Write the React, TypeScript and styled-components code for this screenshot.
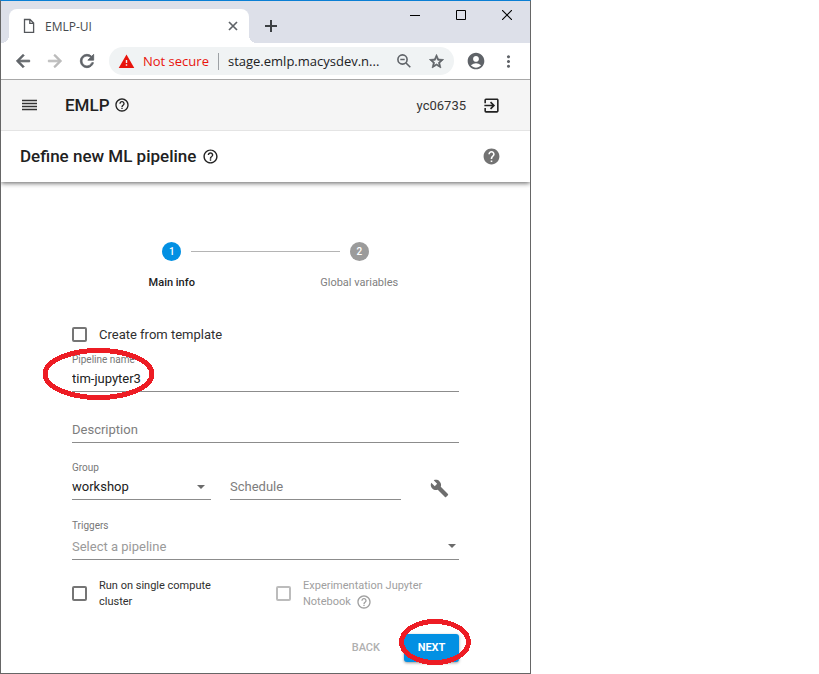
import React from "react";
import styled, { createGlobalStyle, css } from "styled-components";
import {
  MdAccountCircle,
  MdArrowBack,
  MdArrowForward,
  MdBuild,
  MdExitToApp,
  MdHelp,
  MdHelpOutline,
  MdMoreVert,
  MdRefresh,
  MdStarBorder,
  MdWarning,
} from "react-icons/md";

const GlobalStyle = createGlobalStyle`
  *, *::before, *::after { box-sizing: border-box; }
  body {
    margin: 0;
    background: #fff;
    color: #212121;
    font-family: Roboto, "Liberation Sans", sans-serif;
    font-size: 13px;
  }
  button, input, select { font: inherit; color: inherit; }
  svg { display: block; }
`;

const BrowserWindow = styled.div`
  width: 100%;
  max-width: 531px;
  border: 1px solid #666;
  border-top-color: #0a7fd4;
  background: #fff;
`;

const PlainButton = styled.button`
  display: flex;
  align-items: center;
  justify-content: center;
  flex: none;
  padding: 0;
  border: 0;
  background: none;
  cursor: pointer;
`;

/* Browser chrome */

const TabStrip = styled.div`
  display: flex;
  align-items: flex-end;
  height: 42px;
  padding-left: 8px;
  background: #dde0e9;
  font-family: "Open Sans", "Noto Sans", sans-serif;
`;

const Tab = styled.div`
  display: flex;
  align-items: center;
  flex: 0 1 240px;
  height: 34px;
  padding: 0 10px 0 14px;
  border-radius: 8px 8px 0 0;
  background: #fff;
  color: #45494d;
  font-size: 12px;
  position: relative;

  &::before,
  &::after {
    content: "";
    position: absolute;
    bottom: 0;
    width: 8px;
    height: 8px;
  }
  &::before {
    right: 100%;
    background: radial-gradient(circle at 0 0, transparent 8px, #fff 8px);
  }
  &::after {
    left: 100%;
    background: radial-gradient(circle at 100% 0, transparent 8px, #fff 8px);
  }
`;

const TabTitle = styled.span`
  flex: 1;
  margin-left: 10px;
`;

const NewTab = styled(PlainButton)`
  width: 28px;
  height: 34px;
  margin-left: 8px;
`;

const WindowControls = styled.div`
  display: flex;
  align-self: flex-start;
  margin-left: auto;
`;

const WindowControl = styled(PlainButton)`
  width: 46px;
  height: 28px;
`;

const Toolbar = styled.div`
  display: flex;
  align-items: center;
  height: 37px;
  padding: 0 12px;
  border-bottom: 1px solid #a8a8a8;
  color: #5f6368;
`;

const NavButton = styled(PlainButton)<{ $muted?: boolean }>`
  width: 20px;
  height: 28px;
  margin-right: 12px;
  color: ${(p) => (p.$muted ? "#bababa" : "#5f6368")};

  path:not([fill="none"]) {
    stroke-width: 1px;
  }
`;

const AddressBar = styled.div`
  display: flex;
  align-items: center;
  flex: 1;
  min-width: 0;
  height: 28px;
  margin-right: 12px;
  padding: 0 8px 0 9px;
  border-radius: 14px;
  background: #f0f3f4;
  font-family: "Open Sans", "Noto Sans", sans-serif;
  font-size: 13px;
`;

const NotSecure = styled.span`
  display: flex;
  align-items: center;
  flex: none;
  gap: 8px;
  margin-right: 9px;
  padding-right: 9px;
  border-right: 1px solid #9da1a5;
  color: #e8140c;
  line-height: 16px;
`;

const Address = styled.input`
  flex: 1;
  min-width: 0;
  padding: 0;
  border: 0;
  outline: 0;
  background: none;
  color: #202124;
`;

const AddressAction = styled(PlainButton)`
  width: 20px;
  height: 28px;
  margin-left: 12px;
  color: #5f6368;

  svg[stroke-width="0"] path:not([fill="none"]) {
    stroke-width: 1px;
  }
`;

const ToolbarAction = styled(PlainButton)`
  width: 20px;
  height: 28px;
  margin-right: 12px;
  color: #5f6368;

  &:last-child {
    margin-right: 0;
  }
`;

/* Application */

const AppBar = styled.header`
  display: flex;
  align-items: center;
  height: 51px;
  padding: 0 29px 0 21px;
  border-bottom: 1px solid #e4e4e4;
  background: #f5f5f5;
`;

const MenuButton = styled(PlainButton)`
  height: 20px;
  margin-right: 28px;
`;

const Brand = styled.span`
  margin-right: 4px;
  font-size: 17px;
  font-weight: 500;
`;

const UserName = styled.span`
  margin-left: auto;
  margin-right: 16px;
  color: #333;
`;

const TitleBar = styled.div`
  display: flex;
  align-items: center;
  height: 51px;
  padding: 0 29px 0 19px;
  background: #fff;
  box-shadow: 0 1px 5px rgba(0, 0, 0, 0.65);
  clip-path: inset(0 0 -10px 0);
`;

const Title = styled.h1`
  margin: 0 6px 0 0;
  padding-bottom: 2px;
  font-size: 17px;
  font-weight: 500;
`;

const PageHelp = styled(PlainButton)`
  margin-left: auto;
  color: #737373;
`;

const Form = styled.form`
  padding: 60px 71px 11px;
`;

const Stepper = styled.ol`
  display: grid;
  grid-template-columns: 1fr 1fr;
  margin: 0 6px 34px;
  padding: 0;
  list-style: none;
`;

const Step = styled.li<{ $active?: boolean }>`
  color: ${(p) => (p.$active ? "#212121" : "#808080")};
  font-size: 11px;
  font-weight: ${(p) => (p.$active ? 500 : 400)};
  line-height: 16px;
  text-align: center;
`;

const StepHead = styled.div`
  display: flex;
  align-items: center;
  margin-bottom: 14px;
`;

const StepLine = styled.span<{ $side: "left" | "right"; $hidden?: boolean }>`
  flex: 1;
  height: 1px;
  ${(p) => (p.$side === "left" ? "margin-right" : "margin-left")}: 10px;
  background: ${(p) => (p.$hidden ? "transparent" : "#b4b4b4")};
`;

const StepNumber = styled.span<{ $active?: boolean }>`
  width: 19px;
  height: 19px;
  border-radius: 50%;
  background: ${(p) => (p.$active ? "#0290e3" : "#9b9b9b")};
  color: #fff;
  font-size: 10px;
  font-weight: 500;
  line-height: 19px;
`;

const CheckLabel = styled.label<{ $small?: boolean; $disabled?: boolean }>`
  display: flex;
  align-items: center;
  gap: 12px;
  color: ${(p) => (p.$disabled ? "#a0a0a0" : "#303030")};
  font-size: ${(p) => (p.$small ? "11px" : "13px")};
  line-height: ${(p) => (p.$small ? "16px" : "20px")};
`;

const Checkbox = styled.input`
  appearance: none;
  flex: none;
  width: 15px;
  height: 15px;
  margin: 0 0 1px;
  border: 2px solid #757575;
  border-radius: 2px;
  background: #fff;

  &:checked {
    border-color: #0290e3;
    background: #0290e3;
  }
  &:disabled {
    border-color: #bcbcbc;
  }
`;

const Field = styled.div<{ $top: number }>`
  position: relative;
  min-width: 0;
  margin-top: ${(p) => p.$top}px;
`;

const FieldLabel = styled.label`
  display: block;
  height: 12px;
  color: #777;
  font-size: 10px;
  line-height: 14px;
`;

const control = css`
  display: block;
  width: 100%;
  height: 27px;
  padding: 0;
  border: 0;
  border-bottom: 1px solid #8c8c8c;
  border-radius: 0;
  outline: 0;
  background: transparent;
`;

const TextInput = styled.input`
  ${control}
  &::placeholder {
    color: #7d7d7d;
    opacity: 1;
  }
`;

const SelectBox = styled.div<{ $inset: number }>`
  display: grid;
  align-items: center;
  color: #6b6b6b;

  & > * {
    grid-area: 1 / 1;
  }
  & > svg {
    justify-self: end;
    margin-right: ${(p) => p.$inset}px;
    pointer-events: none;
  }
`;

const Select = styled.select<{ $empty?: boolean }>`
  ${control}
  appearance: none;
  height: ${(p) => (p.$empty ? "29px" : "27px")};
  padding-top: ${(p) => (p.$empty ? "3px" : "0")};
  color: ${(p) => (p.$empty ? "#9a9a9a" : "#212121")};
`;

const ScheduleRow = styled.div`
  display: grid;
  grid-template-columns: 139fr 171fr 39px;
  align-items: end;
  column-gap: 19px;
  margin-top: 18px;
`;

const ToolButton = styled(PlainButton)`
  height: 24px;
  color: #6d6d6d;
`;

const Options = styled.div`
  display: grid;
  grid-template-columns: 204fr 183fr;
  margin-top: 18px;
`;

const OptionText = styled.span`
  padding-right: 32px;

  svg {
    display: inline-block;
    margin-left: 2px;
    vertical-align: -5px;
  }
`;

const Actions = styled.div`
  display: flex;
  align-items: center;
  justify-content: flex-end;
  margin-top: 24px;
`;

const ActionButton = styled.button<{ $primary?: boolean }>`
  height: 28px;
  padding: 0 12px 2px;
  border: 0;
  border-radius: 3px;
  background: none;
  color: #b0b0b0;
  font-size: 11px;
  font-weight: 500;
  ${(p) =>
    p.$primary &&
    css`
      width: 55px;
      background: #0290e3;
      box-shadow: 0 1px 3px rgba(0, 0, 0, 0.4);
      color: #fff;
      font-weight: 700;
    `}
`;

const ActionHolder = styled.div`
  position: relative;
  margin-left: 12px;
`;

const Ring = styled.svg<{ $left: number; $top: number }>`
  position: absolute;
  left: ${(p) => p.$left}px;
  top: ${(p) => p.$top}px;
  fill: none;
  stroke: #ed1c24;
  stroke-width: 5;
  shape-rendering: crispEdges;
  pointer-events: none;
`;

const FileIcon = () => (
  <svg width="12" height="16" viewBox="0 0 12 16" fill="none" stroke="#54575b" strokeWidth="1.3">
    <path d="M1.5 1.5h5.5l3.6 3.6v9.2H1.5zM6.8 1.5v3.8h3.8" />
  </svg>
);

const ZoomOutIcon = () => (
  <svg width="14" height="14" viewBox="0 0 14 14" fill="none" stroke="currentColor" strokeWidth="1.6">
    <circle cx="5.5" cy="5.5" r="4.6" />
    <path d="M9 9l4.3 4.3M3.3 5.5h4.4" />
  </svg>
);

const Caret = () => (
  <svg width="8" height="4" viewBox="0 0 8 4" fill="currentColor">
    <path d="M0 0h8L4 4z" />
  </svg>
);

export default function App() {
  return (
    <>
      <GlobalStyle />
      <BrowserWindow>
        <TabStrip>
          <Tab>
            <FileIcon />
            <TabTitle>EMLP-UI</TabTitle>
            <PlainButton aria-label="Close tab">
              <svg width="12" height="12" viewBox="0 0 12 12" stroke="#5f6368" strokeWidth="1.7">
                <path d="M2 2l8 8M10 2l-8 8" />
              </svg>
            </PlainButton>
          </Tab>
          <NewTab aria-label="New tab">
            <svg width="12" height="12" viewBox="0 0 12 12" stroke="#3c4043" strokeWidth="2">
              <path d="M6 0v12M0 6h12" />
            </svg>
          </NewTab>
          <WindowControls>
            <WindowControl aria-label="Minimize">
              <svg width="10" height="10" viewBox="0 0 10 10" stroke="#000">
                <path d="M0 5.5h10" />
              </svg>
            </WindowControl>
            <WindowControl aria-label="Maximize">
              <svg width="10" height="10" viewBox="0 0 10 10" fill="none" stroke="#000">
                <path d="M.5 .5h9v9h-9z" />
              </svg>
            </WindowControl>
            <WindowControl aria-label="Close window">
              <svg width="10" height="10" viewBox="0 0 10 10" stroke="#000" strokeWidth="1.1">
                <path d="M0 0l10 10M10 0L0 10" />
              </svg>
            </WindowControl>
          </WindowControls>
        </TabStrip>

        <Toolbar>
          <NavButton aria-label="Back"><MdArrowBack size={20} /></NavButton>
          <NavButton aria-label="Forward" $muted><MdArrowForward size={20} /></NavButton>
          <NavButton aria-label="Reload"><MdRefresh size={20} /></NavButton>
          <AddressBar>
            <NotSecure>
              <MdWarning size={17} />
              Not secure
            </NotSecure>
            <Address aria-label="Address" defaultValue="stage.emlp.macysdev.n..." />
            <AddressAction aria-label="Zoom"><ZoomOutIcon /></AddressAction>
            <AddressAction aria-label="Bookmark this page"><MdStarBorder size={17} /></AddressAction>
          </AddressBar>
          <ToolbarAction aria-label="Profile"><MdAccountCircle size={20} /></ToolbarAction>
          <ToolbarAction aria-label="Browser menu"><MdMoreVert size={19} /></ToolbarAction>
        </Toolbar>

        <AppBar>
          <MenuButton aria-label="Menu">
            <svg width="15" height="12" viewBox="0 0 15 12" stroke="#333" strokeWidth="1.4">
              <path d="M0 1.5h15M0 4.5h15M0 7.5h15M0 10.5h15" />
            </svg>
          </MenuButton>
          <Brand>EMLP</Brand>
          <PlainButton aria-label="About EMLP"><MdHelpOutline size={16} /></PlainButton>
          <UserName>yc06735</UserName>
          <PlainButton aria-label="Sign out"><MdExitToApp size={19} /></PlainButton>
        </AppBar>

        <TitleBar>
          <Title>Define new ML pipeline</Title>
          <PlainButton aria-label="About pipelines"><MdHelpOutline size={17} /></PlainButton>
          <PageHelp aria-label="Help"><MdHelp size={19} /></PageHelp>
        </TitleBar>

        <Form onSubmit={(e) => e.preventDefault()}>
          <Stepper>
            <Step $active aria-current="step">
              <StepHead>
                <StepLine $side="left" $hidden />
                <StepNumber $active>1</StepNumber>
                <StepLine $side="right" />
              </StepHead>
              Main info
            </Step>
            <Step>
              <StepHead>
                <StepLine $side="left" />
                <StepNumber>2</StepNumber>
                <StepLine $side="right" $hidden />
              </StepHead>
              Global variables
            </Step>
          </Stepper>

          <CheckLabel>
            <Checkbox type="checkbox" />
            Create from template
          </CheckLabel>

          <Field $top={8}>
            <FieldLabel htmlFor="name">Pipeline name</FieldLabel>
            <TextInput id="name" defaultValue="tim-jupyter3" />
            <Ring $left={-30} $top={-6} width="113" height="54">
              <ellipse cx="56.5" cy="27" rx="53.5" ry="23.5" />
            </Ring>
          </Field>

          <Field $top={24}>
            <TextInput aria-label="Description" placeholder="Description" />
          </Field>

          <ScheduleRow>
            <Field $top={0}>
              <FieldLabel htmlFor="group">Group</FieldLabel>
              <SelectBox $inset={6}>
                <Select id="group" defaultValue="workshop">
                  <option>workshop</option>
                </Select>
                <Caret />
              </SelectBox>
            </Field>
            <Field $top={0}>
              <TextInput aria-label="Schedule" placeholder="Schedule" />
            </Field>
            <ToolButton type="button" aria-label="Configure schedule"><MdBuild size={19} /></ToolButton>
          </ScheduleRow>

          <Field $top={19}>
            <FieldLabel htmlFor="triggers">Triggers</FieldLabel>
            <SelectBox $inset={3}>
              <Select id="triggers" $empty defaultValue="">
                <option value="">Select a pipeline</option>
              </Select>
              <Caret />
            </SelectBox>
          </Field>

          <Options>
            <CheckLabel $small>
              <Checkbox type="checkbox" />
              <OptionText>Run on single compute cluster</OptionText>
            </CheckLabel>
            <CheckLabel $small $disabled>
              <Checkbox type="checkbox" disabled />
              <OptionText>
                Experimentation Jupyter Notebook <MdHelpOutline size={16} />
              </OptionText>
            </CheckLabel>
          </Options>

          <Actions>
            <ActionButton type="button">BACK</ActionButton>
            <ActionHolder>
              <ActionButton type="submit" $primary>NEXT</ActionButton>
              <Ring $left={-5} $top={-15} width="73" height="47">
                <ellipse cx="36" cy="23" rx="33.5" ry="20.5" />
              </Ring>
            </ActionHolder>
          </Actions>
        </Form>
      </BrowserWindow>
    </>
  );
}
